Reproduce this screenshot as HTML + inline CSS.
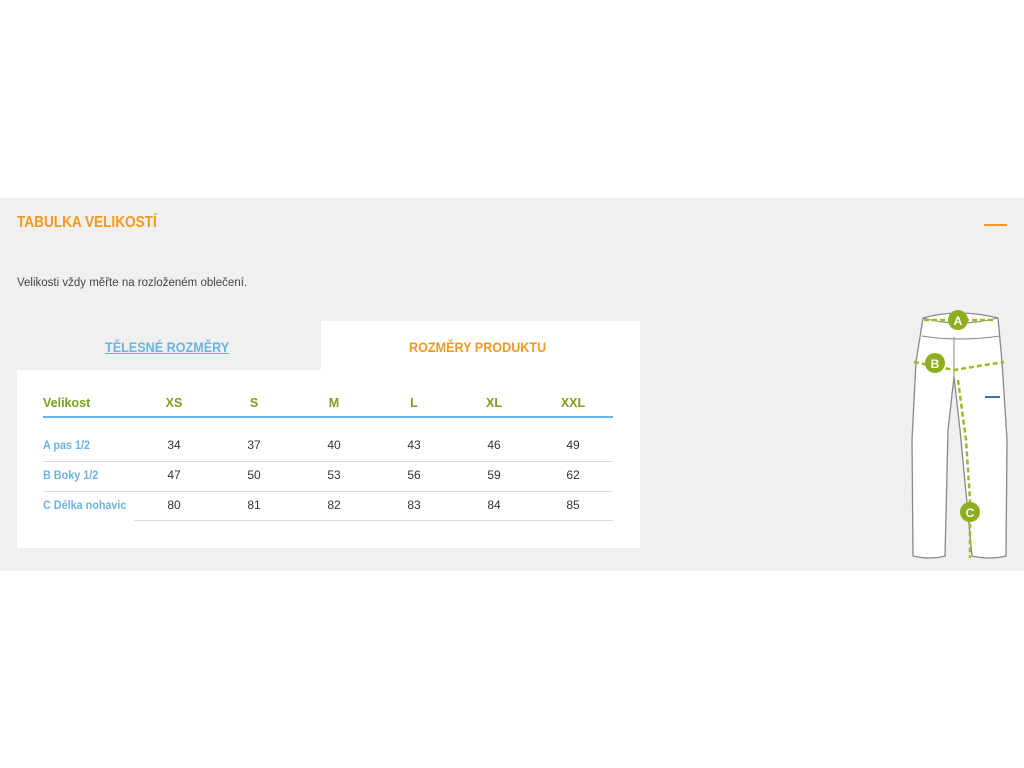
<!DOCTYPE html>
<html><head><meta charset="utf-8"><style>
body{margin:0;width:1024px;height:768px;background:#fff;font-family:"Liberation Sans",sans-serif;position:relative;overflow:hidden}
.band{position:absolute;left:0;top:198px;width:1024px;height:373px;background:#f0f0f0}
.t{position:absolute;white-space:nowrap}
.title{left:17px;top:214px;color:#f39a1e;font-weight:bold;font-size:16px;transform:scaleX(.85);transform-origin:left}
.dash{position:absolute;left:984px;top:224px;width:23px;height:2px;background:#f39a1e}
.note{left:17px;top:277px;font-size:11.5px;color:#444}
.tabA{position:absolute;left:321px;top:321px;width:319px;height:50px;background:#fff}
.panel{position:absolute;left:17px;top:370px;width:623px;height:178px;background:#fff}
.tab1{left:105px;top:339px;font-size:14px;color:#6ab4e4;text-decoration:underline;font-weight:bold;transform:scaleX(.9);transform-origin:left}
.tab2{left:409px;top:339px;font-size:14px;color:#f39a1e;font-weight:bold;transform:scaleX(.9);transform-origin:left}
.h{font-size:12.5px;font-weight:bold;color:#7aa01f;top:396px}
.c{transform:translateX(-50%)}
.lab{font-size:12px;font-weight:bold;color:#6ab4e4;left:43px;transform:scaleX(.9);transform-origin:left}
.n{font-size:12px;color:#333}
.ln{position:absolute;height:1px;background:#ddd}
</style></head><body>
<div class="band"></div>
<div class="t title">TABULKA VELIKOSTÍ</div>
<div class="dash"></div>
<div class="t note">Velikosti vždy měřte na rozloženém oblečení.</div>
<div class="tabA"></div>
<div class="panel"></div>
<div class="t tab1">TĚLESNÉ ROZMĚRY</div>
<div class="t tab2">ROZMĚRY PRODUKTU</div>
<div class="t h" style="left:43px">Velikost</div>
<div class="t h c" style="left:174px">XS</div>
<div class="t h c" style="left:254px">S</div>
<div class="t h c" style="left:334px">M</div>
<div class="t h c" style="left:414px">L</div>
<div class="t h c" style="left:494px">XL</div>
<div class="t h c" style="left:573px">XXL</div>
<div class="ln" style="left:43px;top:416px;width:570px;height:2px;background:#6ab4e4"></div>
<div class="t lab" style="top:438px">A pas 1/2</div>
<div class="t lab" style="top:468px">B Boky 1/2</div>
<div class="t lab" style="top:498px">C Délka nohavic</div>
<div class="ln" style="left:43px;top:461px;width:570px"></div>
<div class="ln" style="left:43px;top:491px;width:570px"></div>
<div class="ln" style="left:134px;top:520px;width:479px"></div>
<div class="t n c" style="left:174px;top:438px">34</div><div class="t n c" style="left:254px;top:438px">37</div><div class="t n c" style="left:334px;top:438px">40</div><div class="t n c" style="left:414px;top:438px">43</div><div class="t n c" style="left:494px;top:438px">46</div><div class="t n c" style="left:573px;top:438px">49</div>
<div class="t n c" style="left:174px;top:468px">47</div><div class="t n c" style="left:254px;top:468px">50</div><div class="t n c" style="left:334px;top:468px">53</div><div class="t n c" style="left:414px;top:468px">56</div><div class="t n c" style="left:494px;top:468px">59</div><div class="t n c" style="left:573px;top:468px">62</div>
<div class="t n c" style="left:174px;top:498px">80</div><div class="t n c" style="left:254px;top:498px">81</div><div class="t n c" style="left:334px;top:498px">82</div><div class="t n c" style="left:414px;top:498px">83</div><div class="t n c" style="left:494px;top:498px">84</div><div class="t n c" style="left:573px;top:498px">85</div>
<svg style="position:absolute;left:890px;top:300px" width="134" height="270" viewBox="0 0 134 270">
<path d="M33 18 Q68 8 108 18 L112 62 L117 140 L116 256 Q100 260 82 256 L70 130 L64 77 L58 130 L55 256 Q40 260 23 256 L22 140 L26 62 Z" fill="#fff" stroke="#888" stroke-width="1.3"/>
<path d="M33 18 Q68 28 108 18 M32 36 Q68 42 110 36 M64 37 L64 77" fill="none" stroke="#888" stroke-width="1"/>
<path d="M34 20 L104 20 M24 62 L64 70 L114 62 M68 80 L76 140 L80 200 L80 258" fill="none" stroke="#9bbb2a" stroke-width="2.5" stroke-dasharray="5 3"/>
<circle cx="68" cy="20" r="10" fill="#8cae1f"/><text x="68" y="25" font-size="12" font-weight="bold" fill="#fff" text-anchor="middle" font-family="Liberation Sans">A</text>
<circle cx="45" cy="63" r="10" fill="#8cae1f"/><text x="45" y="68" font-size="12" font-weight="bold" fill="#fff" text-anchor="middle" font-family="Liberation Sans">B</text>
<circle cx="80" cy="212" r="10" fill="#8cae1f"/><text x="80" y="217" font-size="12" font-weight="bold" fill="#fff" text-anchor="middle" font-family="Liberation Sans">C</text>
<rect x="95" y="96" width="15" height="2" fill="#3a6fa8"/>
</svg>
</body></html>
